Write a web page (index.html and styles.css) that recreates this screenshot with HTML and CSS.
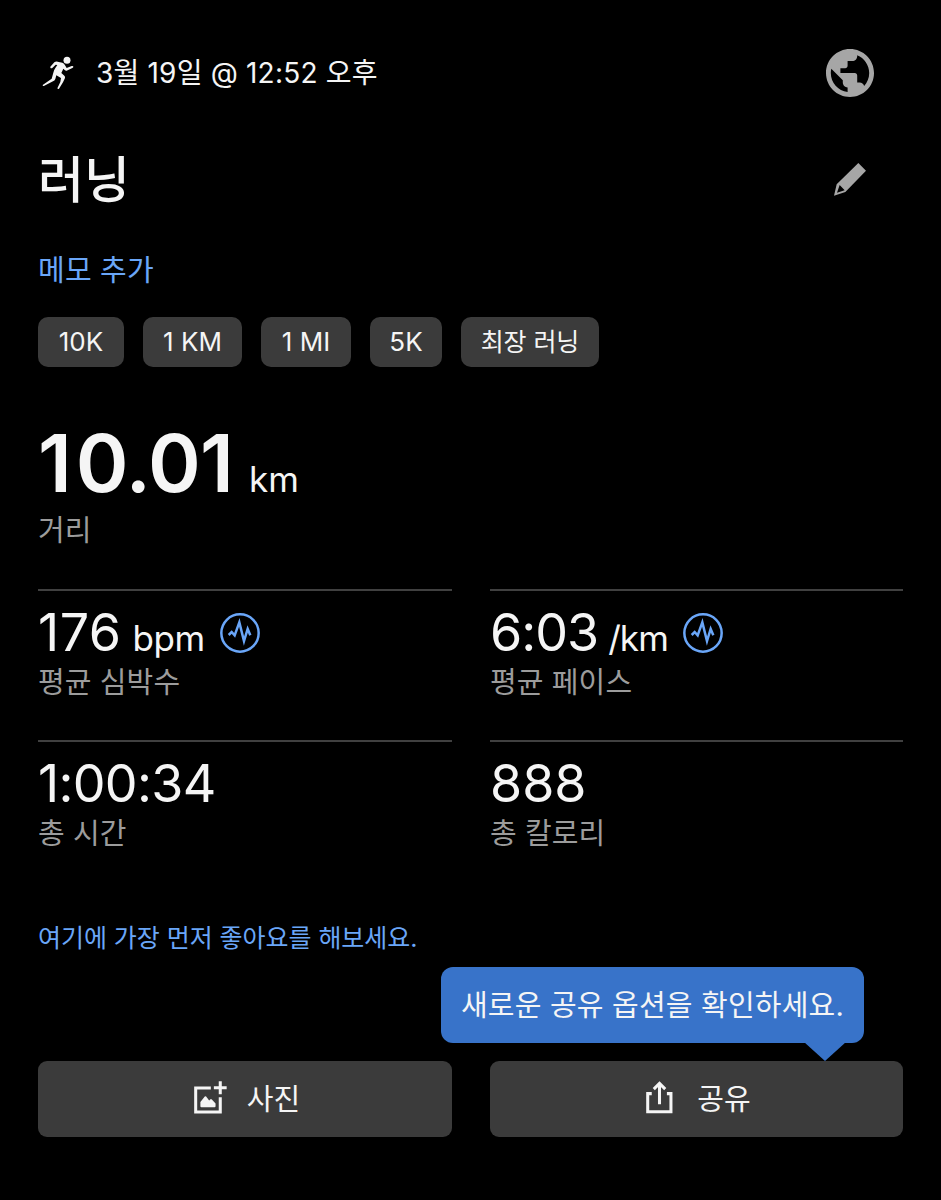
FILE: index.html
```html
<!DOCTYPE html>
<html lang="ko">
<head>
<meta charset="utf-8">
<title>러닝</title>
<link rel="stylesheet" href="styles.css">
</head>
<body>
<main class="page">
  <header class="header">
    <svg class="runner" viewBox="36 48 96 102"><circle cx="111" cy="61" r="10.5"/><path d="M61 80 L73 67 Q77 64 83 65 L97 68 Q103 70 105 76 L110 84 L125 78 Q130 77 130 80 Q130 82 127 84 L110 92 Q107 93 104 90 L100 86 L94 99 L103 107 Q106 110 105 114 L99 127 L87 146 Q84 149 82 145 L91 126 L93 114 L79 106 L76 117 Q74 122 69 124 L43 137 Q38 139 38 135 L65 116 L70 98 Q71 91 76 84 L82 75 L77 74 L67 84 Q63 86 61 83 Z"/></svg>
    <time class="date">3월 19일 @ 12:52 오후</time>
    <svg class="globe" viewBox="2 2 20 20"><path d="M12 2C6.48 2 2 6.48 2 12s4.48 10 10 10 10-4.48 10-10S17.52 2 12 2zm-1 17.93c-3.95-.49-7-3.85-7-7.93 0-.62.08-1.21.21-1.79L9 15v1c0 1.1.9 2 2 2v1.93zm6.9-2.54c-.26-.81-1-1.39-1.9-1.39h-1v-3c0-.55-.45-1-1-1H8v-2h2c.55 0 1-.45 1-1V7h2c1.1 0 2-.9 2-2v-.41c2.93 1.19 5 4.06 5 7.41 0 2.08-.8 3.97-2.1 5.39z"/></svg>
  </header>
  <div class="title-row">
    <h1 class="title">러닝</h1>
    <svg class="pencil" viewBox="72 368 96 99"><path fill-rule="evenodd" d="M145 368 L168 391 L106 455 L72 466 L80 432 Z M89 434 L81 457 L104 450 Z"/></svg>
  </div>
  <a class="memo">메모 추가</a>
  <ul class="chips">
    <li class="chip chip-10k">10K</li>
    <li class="chip chip-km">1 KM</li>
    <li class="chip chip-mi">1 MI</li>
    <li class="chip chip-5k">5K</li>
    <li class="chip chip-longest">최장 러닝</li>
  </ul>
  <section class="distance">
    <div class="big"><span class="big-value"><span class="one">1</span>0.01</span><span class="unit">km</span></div>
    <div class="label">거리</div>
  </section>
  <section class="stats">
    <div class="stat">
      <div class="value"><span class="v-hr">176</span><span class="unit u-hr">bpm</span>
        <svg class="pulse" viewBox="0 0 120 120"><circle cx="60" cy="60" r="56"/><path d="M26 66 L35 57 L44 67 L58 28 L72 84 L83 48 L91 67"/></svg></div>
      <div class="label">평균 심박수</div>
    </div>
    <div class="stat">
      <div class="value"><span class="v-pace">6:03</span><span class="unit u-pace">/km</span>
        <svg class="pulse" viewBox="0 0 120 120"><circle cx="60" cy="60" r="56"/><path d="M26 66 L35 57 L44 67 L58 28 L72 84 L83 48 L91 67"/></svg></div>
      <div class="label">평균 페이스</div>
    </div>
    <div class="stat">
      <div class="value"><span class="v-time">1:00:34</span></div>
      <div class="label">총 시간</div>
    </div>
    <div class="stat">
      <div class="value"><span class="v-cal">888</span></div>
      <div class="label">총 칼로리</div>
    </div>
  </section>
  <a class="like">여기에 가장 먼저 좋아요를 해보세요.</a>
  <div class="actions">
    <button class="action"><svg class="icon-photo" viewBox="491 512 98 98"><path class="line" d="M541 532.5 H496 V604 H569 V560 M569 513 V551 M550 532 H588"/><path class="solid" d="M510 587 V574 L523 558 Q525 556 527 558 L536 570 L540 566 Q542 565 544 567 L555 579 V587 Q555 590 552 590 H513 Q510 590 510 587 Z"/></svg><span>사진</span></button>
    <button class="action"><svg class="icon-share" viewBox="648 378 80 98"><path class="line" d="M665 415.5 H653 V469 H722 V415.5 H710 M688 447 V386 M671 402 L688 385 L705 402"/></svg><span>공유</span></button>
    <div class="tooltip">새로운 공유 옵션을 확인하세요.</div>
  </div>
</main>
</body>
</html>
```
FILE: styles.css
```css
* { box-sizing: border-box; }
body {
  margin: 0;
  background: #000;
  color: #f5f5f5;
  font-family: Inter, "Noto Sans CJK KR", sans-serif;
}
.page {
  width: 941px;
  height: 1200px;
  padding: 49px 38px 0;
  overflow: hidden;
}
.header { display: flex; align-items: center; height: 48px; }
.runner { width: 32px; height: 34px; margin-left: 4px; fill: #f5f5f5; }
.date { margin-left: 22px; font-size: 28px; line-height: 48px; letter-spacing: 0.2px; white-space: nowrap; }
.globe { width: 48px; height: 48px; margin: 0 29px 0 auto; fill: #a6a6a6; }
.title-row { display: flex; align-items: center; justify-content: space-between; height: 60px; margin-top: 52px; }
.title { margin: 0; padding-top: 2px; font-size: 50px; line-height: 60px; font-weight: 500; }
.pencil { width: 32px; height: 33px; margin-right: 37px; fill: #a6a6a6; }
.memo { display: block; margin-top: 42px; font-size: 29px; line-height: 40px; letter-spacing: 0.2px; color: #6aa6f8; }
.chips { display: flex; gap: 19px; margin: 26px 0 0; padding: 0; list-style: none; }
.chip {
  height: 50px;
  border-radius: 10px;
  background: #3b3b3b;
  font-size: 26px;
  line-height: 50px;
  text-align: center;
  white-space: nowrap;
}
.chip-10k { width: 86px; }
.chip-km { width: 99px; }
.chip-mi { width: 90px; }
.chip-5k { width: 72px; }
.chip-longest { width: 138px; font-size: 25px; letter-spacing: -0.1px; }
.distance { margin-top: 56px; }
.big { height: 80px; line-height: 80px; white-space: nowrap; }
.big-value { font-size: 80px; font-weight: 600; letter-spacing: -0.8px; }
.one { letter-spacing: 4px; }
.unit { font-size: 35px; }
.big .unit { margin-left: 16px; }
.label { font-size: 29px; letter-spacing: 0.1px; color: #9c9c9c; white-space: nowrap; }
.distance .label { margin-top: 8px; line-height: 40px; }
.stats { display: grid; grid-template-columns: 414px 413px; column-gap: 38px; margin-top: 38px; }
.stat { height: 151px; padding-top: 12px; border-top: 2px solid #404040; }
.value { display: flex; align-items: baseline; height: 60px; font-size: 52px; line-height: 60px; white-space: nowrap; }
.value .unit { margin-left: 12px; }
.v-hr { letter-spacing: 0.5px; }
.v-pace { letter-spacing: -1px; }
.v-time { letter-spacing: -0.7px; }
.value .u-hr { margin-left: 11px; letter-spacing: -0.4px; }
.value .u-pace { margin-left: 10px; letter-spacing: -0.9px; }
.stat .label { margin-top: 5px; line-height: 30px; }
.pulse { width: 40px; height: 40px; margin: 0 0 1px 15px; align-self: center; fill: none; stroke: #6aa6f8; stroke-width: 7.5; }
.like { display: block; margin-top: 27px; font-size: 25px; line-height: 40px; letter-spacing: -0.05px; color: #6aa6f8; white-space: nowrap; }
.actions { position: relative; display: grid; grid-template-columns: 414px 413px; column-gap: 38px; margin-top: 103px; }
.action {
  display: flex;
  align-items: center;
  justify-content: center;
  height: 76px;
  padding: 0 0 0 4px;
  border: 0;
  border-radius: 9px;
  background: #3b3b3b;
  color: #f5f5f5;
  font: 29px/76px Inter, "Noto Sans CJK KR", sans-serif;
}
.action svg { height: 33px; margin-bottom: 3px; }
.action span { padding-top: 1px; }
.icon-photo { width: 33px; margin-right: 20px; }
.icon-share { width: 27px; margin-right: 24px; }
.line { fill: none; stroke: #f5f5f5; stroke-width: 9; }
.solid { fill: #f5f5f5; }
.tooltip {
  position: absolute;
  right: 39px;
  bottom: 94px;
  width: 423px;
  height: 76px;
  border-radius: 12px;
  background: #3873c9;
  font-size: 29px;
  line-height: 77px;
  letter-spacing: 0.2px;
  text-align: center;
  white-space: nowrap;
}
.tooltip::after {
  content: "";
  position: absolute;
  top: 75px;
  right: 18px;
  border: solid transparent;
  border-width: 19px 21px 0;
  border-top-color: #3873c9;
}
```
